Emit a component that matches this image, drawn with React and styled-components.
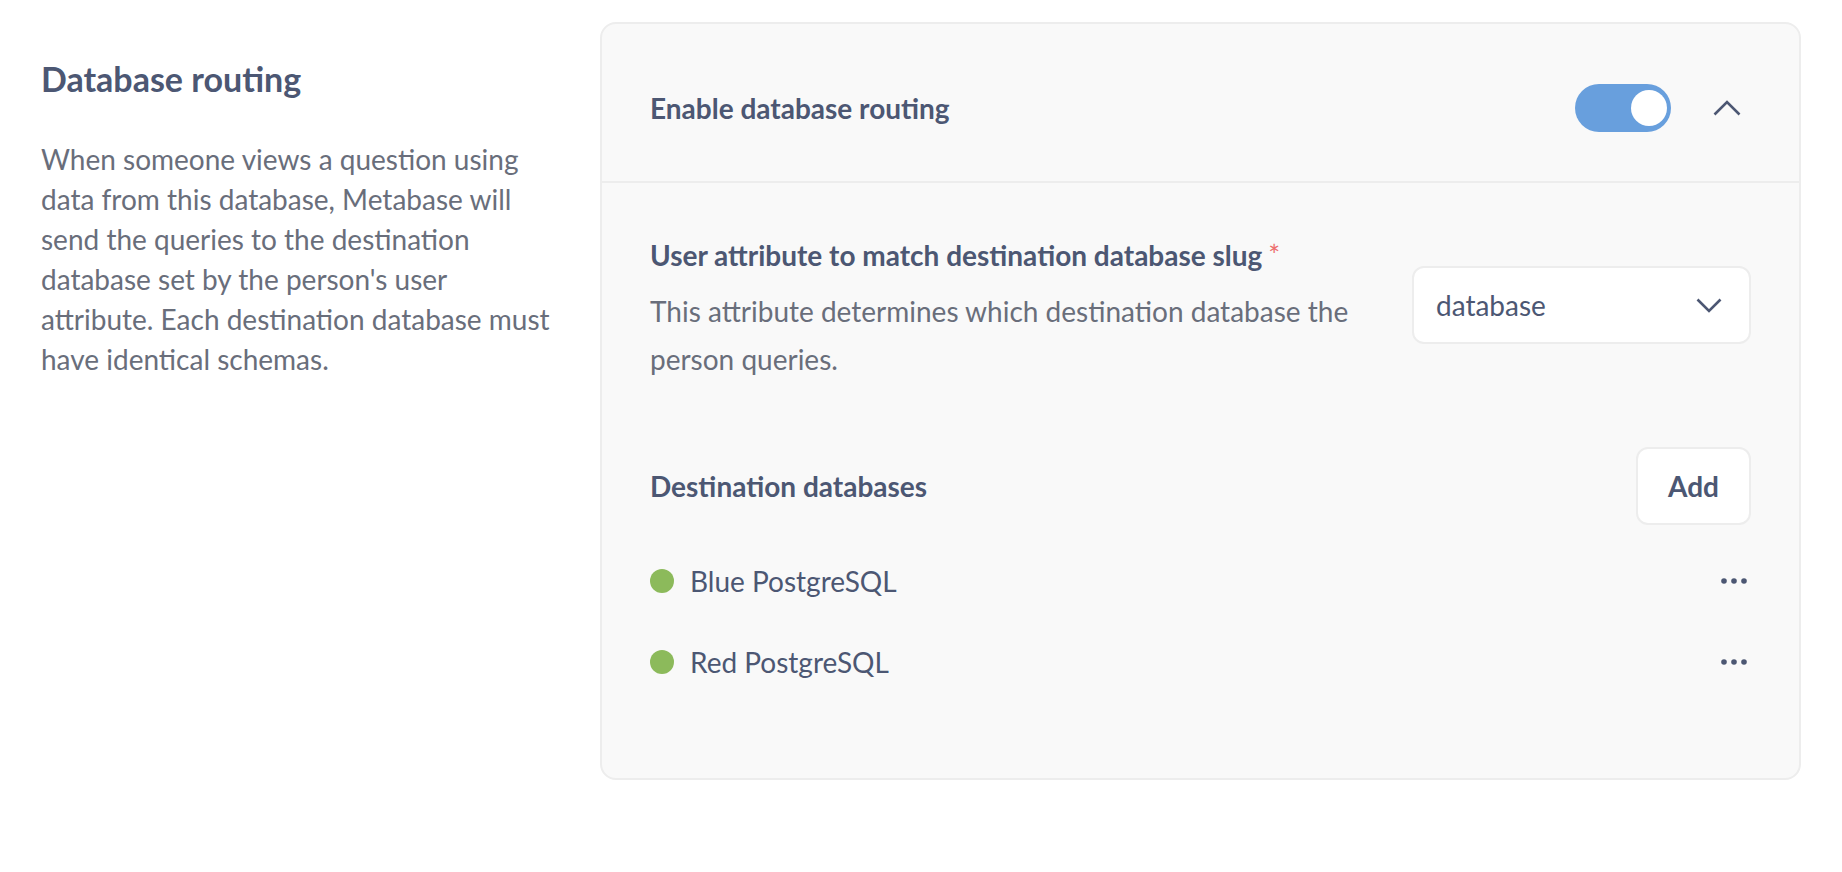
import styled, { createGlobalStyle } from 'styled-components'

const GlobalStyle = createGlobalStyle`
	body {
		margin: 0;
		background: #ffffff;
		font-family: Lato, "Open Sans", sans-serif;
		color: #4c5773;
	}
`

const destinations = [
	{ id: 1, name: 'Blue PostgreSQL' },
	{ id: 2, name: 'Red PostgreSQL' },
]

const ChevronUp = () => (
	<svg width='28' height='16' viewBox='0 0 28 16' fill='none'>
		<path d='M1.5 14.5 L14 2 L26.5 14.5' stroke='#4c5773' strokeWidth='2.6' />
	</svg>
)

const ChevronDown = () => (
	<svg width='26' height='15' viewBox='0 0 26 15' fill='none'>
		<path d='M1.5 1.5 L13 13 L24.5 1.5' stroke='#4c5773' strokeWidth='2.6' />
	</svg>
)

const Ellipsis = () => (
	<svg width='26' height='6' viewBox='0 0 26 6' fill='#4c5773'>
		<circle cx='3' cy='3' r='2.8' />
		<circle cx='13' cy='3' r='2.8' />
		<circle cx='23' cy='3' r='2.8' />
	</svg>
)

const App = () => {
	return (
		<>
			<GlobalStyle />
			<Page>
				<Aside>
					<Title>Database routing</Title>
					<Description>
						When someone views a question using data from this database, Metabase will
						send the queries to the destination database set by the person's user
						attribute. Each destination database must have identical schemas.
					</Description>
				</Aside>

				<Card>
					<CardHeader>
						<HeaderTitle>Enable database routing</HeaderTitle>
						<Toggle aria-checked='true' role='switch'>
							<Knob />
						</Toggle>
						<IconButton>
							<ChevronUp />
						</IconButton>
					</CardHeader>

					<CardBody>
						<AttributeRow>
							<FieldText>
								<Label>
									User attribute to match destination database slug
									<Required>*</Required>
								</Label>
								<Hint>This attribute determines which destination database the person queries.</Hint>
							</FieldText>
							<Select>
								<span>database</span>
								<ChevronDown />
							</Select>
						</AttributeRow>

						<SectionRow>
							<Label>Destination databases</Label>
							<Button>Add</Button>
						</SectionRow>

						<List>
							{destinations.map((db) => (
								<Row key={db.id}>
									<StatusDot />
									<RowName>{db.name}</RowName>
									<MenuButton>
										<Ellipsis />
									</MenuButton>
								</Row>
							))}
						</List>
					</CardBody>
				</Card>
			</Page>
		</>
	)
}

const Page = styled.main`
	display: flex;
	align-items: flex-start;
	gap: 47px;
	padding: 22px 41px;
`

const Aside = styled.section`
	width: 512px;
	flex-shrink: 0;
	padding-top: 37px;
`

const Title = styled.h2`
	margin: 0;
	font-size: 34px;
	line-height: 40px;
	font-weight: 700;
	color: #4c5773;
`

const Description = styled.p`
	margin: 40px 0 0;
	font-size: 28px;
	line-height: 40px;
	color: #696e7b;
`

const Card = styled.section`
	flex: 1;
	background: #f9f9f9;
	border: 2px solid #ededed;
	border-radius: 16px;
`

const CardHeader = styled.header`
	display: flex;
	align-items: center;
	padding: 60px 48px 49px;
	border-bottom: 2px solid #ededed;
`

const HeaderTitle = styled.h3`
	flex: 1;
	margin: 0;
	font-size: 28px;
	line-height: 40px;
	font-weight: 700;
	color: #4c5773;
`

const Toggle = styled.div`
	width: 96px;
	height: 48px;
	box-sizing: border-box;
	display: flex;
	align-items: center;
	justify-content: flex-end;
	padding: 0 4px;
	border-radius: 24px;
	background: #689fdd;
`

const Knob = styled.span`
	width: 36px;
	height: 36px;
	border-radius: 50%;
	background: #ffffff;
`

const IconButton = styled.div`
	width: 48px;
	height: 48px;
	margin-left: 32px;
	display: flex;
	align-items: center;
	justify-content: center;
`

const CardBody = styled.div`
	padding: 52px 48px 92px;
`

const AttributeRow = styled.div`
	display: flex;
	align-items: center;
	gap: 32px;
`

const FieldText = styled.div`
	flex: 1;
`

const Label = styled.div`
	font-size: 28px;
	line-height: 40px;
	font-weight: 700;
	color: #4c5773;
`

const Required = styled.span`
	margin-left: 6px;
	font-size: 28px;
	font-weight: 400;
	color: #ed6e6e;
`

const Hint = styled.p`
	margin: 12px 0 0;
	font-size: 28px;
	line-height: 48px;
	color: #696e7b;
`

const Select = styled.div`
	width: 339px;
	height: 78px;
	box-sizing: border-box;
	display: flex;
	align-items: center;
	justify-content: space-between;
	margin-bottom: 8px;
	padding: 0 27px 0 22px;
	background: #ffffff;
	border: 2px solid #ededed;
	border-radius: 12px;
	font-size: 28px;
	color: #4c5773;
`

const SectionRow = styled.div`
	display: flex;
	align-items: center;
	justify-content: space-between;
	margin-top: 64px;
`

const Button = styled.button`
	height: 78px;
	padding: 0 30px;
	background: #ffffff;
	border: 2px solid #ededed;
	border-radius: 12px;
	font-family: inherit;
	font-size: 28px;
	font-weight: 700;
	color: #4c5773;
`

const List = styled.ul`
	list-style: none;
	margin: 32px 0 0;
	padding: 0;
	display: flex;
	flex-direction: column;
	gap: 33px;
`

const Row = styled.li`
	display: flex;
	align-items: center;
	gap: 16px;
	height: 48px;
`

const StatusDot = styled.span`
	width: 24px;
	height: 24px;
	border-radius: 50%;
	background: #8cba5b;
`

const RowName = styled.span`
	flex: 1;
	font-size: 28px;
	color: #4c5773;
`

const MenuButton = styled.div`
	display: flex;
	align-items: center;
	padding-right: 4px;
`

export default App
